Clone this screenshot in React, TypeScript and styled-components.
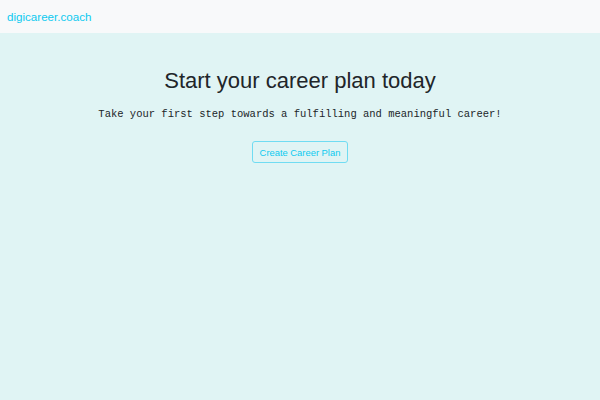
import React from "react";
import styled, { createGlobalStyle } from "styled-components";

const Global = createGlobalStyle`
  html, body { margin: 0; padding: 0; }
  body {
    font-family: "Liberation Sans", Arial, sans-serif;
    background: #e0f4f4;
    width: 600px;
    height: 400px;
    overflow: hidden;
  }
`;

const Page = styled.div`
  display: flex;
  flex-direction: column;
  width: 600px;
  height: 400px;
  background: #e0f4f4;
`;

const NavBar = styled.nav`
  height: 33px;
  background: #f8f9fa;
  display: flex;
  align-items: center;
  padding: 0 7px;
  box-sizing: border-box;
`;

const Brand = styled.a`
  color: #0dcaf0;
  font-size: 11.6px;
  text-decoration: none;
`;

const Hero = styled.main`
  display: flex;
  flex-direction: column;
  align-items: center;
  padding-top: 34px;
`;

const Title = styled.h1`
  margin: 0;
  font-weight: 400;
  font-size: 22px;
  line-height: 28px;
  color: #212529;
`;

const Lead = styled.p`
  margin: 12px 0 0;
  font-family: "Liberation Mono", monospace;
  font-size: 10.5px;
  line-height: 14px;
  color: #212529;
`;

const OutlineButton = styled.button`
  margin-top: 20px;
  width: 96px;
  height: 22px;
  padding: 0;
  border: 1px solid #70dcf2;
  border-radius: 3px;
  background: transparent;
  color: #0dcaf0;
  font-family: "Liberation Sans", Arial, sans-serif;
  font-size: 9.4px;
  cursor: pointer;
`;

export default function App() {
  return (
    <>
      <Global />
      <Page>
        <NavBar>
          <Brand href="#">digicareer.coach</Brand>
        </NavBar>
        <Hero>
          <Title>Start your career plan today</Title>
          <Lead>Take your first step towards a fulfilling and meaningful career!</Lead>
          <OutlineButton>Create Career Plan</OutlineButton>
        </Hero>
      </Page>
    </>
  );
}
